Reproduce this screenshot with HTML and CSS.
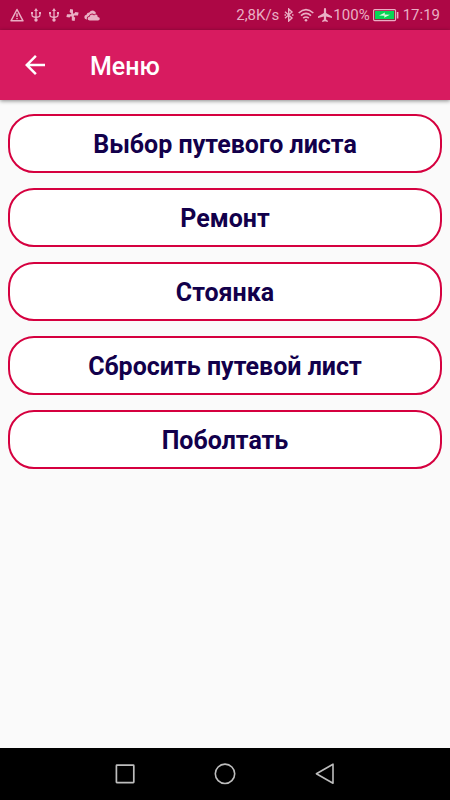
FILE: index.html
```html
<!DOCTYPE html>
<html lang="ru">
<head>
  <meta charset="UTF-8" />
  <meta name="viewport" content="width=device-width, initial-scale=1.0"/>
  <title>Меню</title>
  <link rel="stylesheet" href="styles.css">
</head>
<body>

  <!-- Status bar -->
  <div class="status-bar">
    <div class="status-left">
      <svg width="14" height="14" viewBox="0 0 14 14" fill="none" stroke="currentColor" stroke-width="1.5">
        <path d="M7 1.5 L13 12.8 H1 Z" stroke-linejoin="round"/>
        <path d="M7 5.2 V9 M7 10 V11.3"/>
      </svg>
      <svg width="12" height="14" viewBox="0 0 12 14" fill="none" stroke="currentColor" stroke-width="1.3">
        <path d="M6 2 V12 M2 5 V7 Q2 8.6 3.5 8.8 L6 9.5 L8.5 8.8 Q10 8.6 10 7 V5"/>
        <path d="M6 0 L8 3 H4 Z M1 4 H3 V6 H1 Z M9 4 H11 V6 H9 Z" fill="currentColor" stroke="none"/>
        <circle cx="6" cy="12" r="1.7" fill="currentColor" stroke="none"/>
      </svg>
      <svg width="12" height="14" viewBox="0 0 12 14" fill="none" stroke="currentColor" stroke-width="1.3">
        <path d="M6 2 V12 M2 5 V7 Q2 8.6 3.5 8.8 L6 9.5 L8.5 8.8 Q10 8.6 10 7 V5"/>
        <path d="M6 0 L8 3 H4 Z M1 4 H3 V6 H1 Z M9 4 H11 V6 H9 Z" fill="currentColor" stroke="none"/>
        <circle cx="6" cy="12" r="1.7" fill="currentColor" stroke="none"/>
      </svg>
      <svg class="fan" width="13" height="14" viewBox="0 0 13 14" fill="currentColor">
        <path d="M6 6 L3.6 4 L4.2 1 L7 1.4 V6 Z M7.4 6.4 L9.4 4 L12.6 4.6 L12 7.6 H7.4 Z M7 7.8 L9.2 9.8 L8.6 13 L5.8 12.5 V7.8 Z M5.5 7.4 L3.5 9.6 L0.4 9 L1 6.2 H5.5 Z"/>
        <path d="M5 5.5 H8 V8.5 H5 Z"/>
      </svg>
      <svg width="16" height="14" viewBox="0 0 16 14" fill="currentColor">
        <path d="M2.6 11.4 Q0.3 11.2 0.3 9 Q0.4 7 2.5 6.7 Q3 4.4 5.3 4.4 Q7 1.8 9.8 2.7 Q11.8 3.5 12.2 5.6 Q11 5.5 10.2 6.4 Q8.6 5 6.6 5.9 Q5.2 6.6 5 8 Q3 8.4 2.8 10 Q2.7 11 3.2 11.4 Z"/>
        <path d="M5.8 12.4 Q3.6 12.2 3.6 10.4 Q3.7 8.9 5.6 8.7 Q5.8 6.5 7.8 6.4 Q9.3 6.4 10.1 7.6 Q11.2 6 12.7 6.8 Q13.7 7.4 13.7 8.9 Q15.8 9 15.8 10.7 Q15.7 12.4 14 12.4 Z"/>
      </svg>
    </div>

    <div class="status-right">
      <span>2,8K/s</span>
      <svg class="bluetooth" width="10" height="14" viewBox="0 0 10 14" fill="none" stroke="currentColor" stroke-width="1.4">
        <path d="M1 3.8 L8 10 L4.7 13 V1 L8 4 L1 10.2"/>
        <path d="M0.5 7 H2 M8 7 H9.5"/>
      </svg>
      <svg class="wifi" width="16" height="14" viewBox="0 0 16 14" fill="none" stroke="currentColor" stroke-width="1.6">
        <path d="M0.7 5 Q8 -1.8 15.3 5 M3 7.7 Q8 3.2 13 7.7 M5.2 10.2 Q8 7.8 10.8 10.2"/>
        <circle cx="8" cy="12.2" r="1.3" fill="currentColor" stroke="none"/>
      </svg>
      <svg class="plane" width="14" height="14" viewBox="0 0 14 14" fill="currentColor">
        <path d="M7 0 Q8.1 0 8.1 1.4 V5 L14 8.6 V10 L8.1 8.4 V11.4 L9.8 12.8 V14 L7 13.3 L4.2 14 V12.8 L5.9 11.4 V8.4 L0 10 V8.6 L5.9 5 V1.4 Q5.9 0 7 0 Z"/>
      </svg>
      <span>100%</span>
      <svg class="battery" width="26" height="14" viewBox="0 0 26 14">
        <rect x="0.6" y="1.6" width="22" height="11" rx="1" fill="none" stroke="currentColor" stroke-width="1.1"/>
        <rect x="2" y="3" width="19.2" height="8.2" fill="#06d755"/>
        <path d="M6 7.6 L12 4.6 L11.6 6.4 L17 6.7 L11 9.7 L11.5 7.8 Z" fill="#d8f8dc"/>
        <path d="M24.6 4 V10.5" stroke="currentColor" stroke-width="1.6"/>
      </svg>
      <span>17:19</span>
    </div>
  </div>

  <!-- App bar -->
  <header class="app-bar">
    <button class="back" type="button" aria-label="Назад">
      <svg width="30" height="30" viewBox="0 0 24 24" fill="currentColor">
        <path d="M20 11 H7.83 L13.42 5.41 L12 4 L4 12 L12 20 L13.41 18.59 L7.83 13 H20 Z"/>
      </svg>
    </button>
    <h1>Меню</h1>
  </header>

  <main class="menu">
    <button class="menu-button" type="button">Выбор путевого листа</button>
    <button class="menu-button" type="button">Ремонт</button>
    <button class="menu-button" type="button">Стоянка</button>
    <button class="menu-button" type="button">Сбросить путевой лист</button>
    <button class="menu-button" type="button">Поболтать</button>
  </main>

  <!-- System navigation -->
  <nav class="system-nav">
    <button type="button" aria-label="Недавние приложения">
      <svg width="24" height="24" viewBox="0 0 24 24" fill="none" stroke="currentColor" stroke-width="1.7">
        <rect x="3.4" y="3.2" width="17.4" height="17.4" rx="0.5"/>
      </svg>
    </button>
    <button type="button" aria-label="Домой">
      <svg width="24" height="24" viewBox="0 0 24 24" fill="none" stroke="currentColor" stroke-width="1.6">
        <circle cx="12" cy="11.8" r="9.7"/>
      </svg>
    </button>
    <button type="button" aria-label="Назад">
      <svg width="24" height="24" viewBox="0 0 24 24" fill="none" stroke="currentColor" stroke-width="1.6" stroke-linejoin="round">
        <path d="M20 2.2 V21.2 L3.4 11.7 Z"/>
      </svg>
    </button>
  </nav>

</body>
</html>
```

FILE: styles.css
```css
body {
  font-family: Roboto, sans-serif;
  margin: 0;
  min-height: 100vh;
  display: flex;
  flex-direction: column;
  background-color: #fafafa;
}

button {
  font-family: inherit;
  border: none;
  background: none;
  padding: 0;
  cursor: pointer;
}

svg {
  display: block;
  flex-shrink: 0;
}

.status-bar {
  display: flex;
  justify-content: space-between;
  align-items: center;
  height: 30px;
  padding: 0 10px;
  background-color: #ad0745;
  color: #e9afc4;
  font-size: 15px;
}

.status-left {
  display: flex;
  align-items: center;
  gap: 6px;
}

.fan {
  margin-right: -1px;
}

.status-right {
  display: flex;
  align-items: center;
}

.bluetooth {
  margin-left: 5px;
}

.wifi {
  margin: 0 4px;
}

.plane {
  margin-right: 1px;
}

.battery {
  margin: 0 4px 0 3px;
}

.app-bar {
  display: flex;
  align-items: center;
  height: 70px;
  padding: 0 20px;
  background-color: #d81b60;
  color: white;
  box-shadow: 0 1px 4px rgba(0, 0, 0, 0.45);
}

.back {
  color: white;
}

h1 {
  margin: 0 0 0 40px;
  padding-top: 2px;
  font-size: 25px;
  font-weight: 500;
}

.menu {
  flex: 1;
  display: flex;
  flex-direction: column;
  gap: 15px;
  padding: 14px 8px;
}

.menu-button {
  height: 59px;
  padding-top: 2px;
  border: 2px solid #d5003f;
  border-radius: 26px;
  background-color: white;
  color: #12004b;
  font-size: 25px;
  font-weight: bold;
}

.system-nav {
  display: flex;
  justify-content: center;
  gap: 76px;
  height: 52px;
  background-color: black;
  color: #bdbdbd;
}

.system-nav button {
  color: inherit;
}
```
